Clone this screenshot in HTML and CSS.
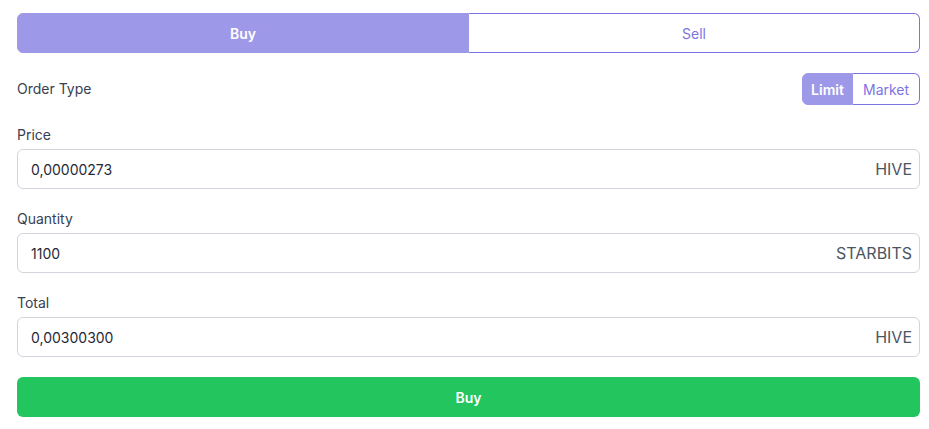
FILE: index.html
```html
<!DOCTYPE html>
<html>
<head>
<meta charset="utf-8">
<link rel="stylesheet" href="styles.css">
</head>
<body>
<div class="form">
  <div class="tabs">
    <button class="tab tab-active">Buy</button>
    <button class="tab">Sell</button>
  </div>
  <div class="row">
    <span class="label">Order Type</span>
    <div class="toggle">
      <button class="tog tog-active">Limit</button>
      <button class="tog">Market</button>
    </div>
  </div>
  <div class="field">
    <label class="label">Price</label>
    <div class="group">
      <input class="inp" value="0,00000273">
      <span class="unit">HIVE</span>
    </div>
  </div>
  <div class="field">
    <label class="label">Quantity</label>
    <div class="group">
      <input class="inp" value="1100">
      <span class="unit">STARBITS</span>
    </div>
  </div>
  <div class="field">
    <label class="label">Total</label>
    <div class="group">
      <input class="inp" value="0,00300300">
      <span class="unit">HIVE</span>
    </div>
  </div>
  <button class="submit">Buy</button>
</div>
</body>
</html>
```
FILE: styles.css
```css
* { box-sizing: border-box; }
html, body { margin: 0; background: #ffffff; }
body {
  font-family: Inter, "Noto Sans", sans-serif;
  padding: 13px 9px 0 17px;
  color: #374151;
}
.form { display: flex; flex-direction: column; gap: 20px; }
.tabs { display: flex; height: 40px; }
.tab {
  flex: 1;
  font: 400 14px Inter, sans-serif;
  border: 1px solid #7d74e3;
  background: #fff;
  color: #7d74e3;
  cursor: pointer;
}
.tab:first-child { border-radius: 6px 0 0 6px; }
.tab:last-child { border-radius: 0 6px 6px 0; border-left: none; }
.tab-active { background: #9d98e7; color: #fff; border-color: #9d98e7; font-weight: 600; }
.row { display: flex; justify-content: space-between; align-items: center; height: 32px; }
.label { font-size: 14px; line-height: 20px; font-weight: 400; color: #374151; }
.toggle { display: flex; height: 32px; }
.tog {
  font: 400 14px Inter, sans-serif;
  border: 1px solid #7d74e3;
  background: #fff;
  color: #7d74e3;
  padding: 0 10px;
}
.tog:first-child { border-radius: 6px 0 0 6px; }
.tog:last-child { border-radius: 0 6px 6px 0; border-left: none; width: 67px; }
.tog-active { background: #9d98e7; border-color: #9d98e7; color: #fff; font-weight: 600; width: 51px; padding: 0; }
.field { display: flex; flex-direction: column; gap: 4px; }
.group {
  display: flex;
  align-items: center;
  height: 40px;
  border: 1px solid #d1d5db;
  border-radius: 6px;
  padding: 0 7px 0 13px;
}
.inp {
  flex: 1;
  border: none;
  outline: none;
  padding: 0;
  font: 400 14px Inter, sans-serif;
  color: #1f2937;
  background: transparent;
  min-width: 0;
}
.unit { font-size: 16px; color: #4b5563; }
.submit {
  height: 40px;
  border: none;
  border-radius: 6px;
  background: #22c55e;
  color: #fff;
  font: 600 14px Inter, sans-serif;
}
```
